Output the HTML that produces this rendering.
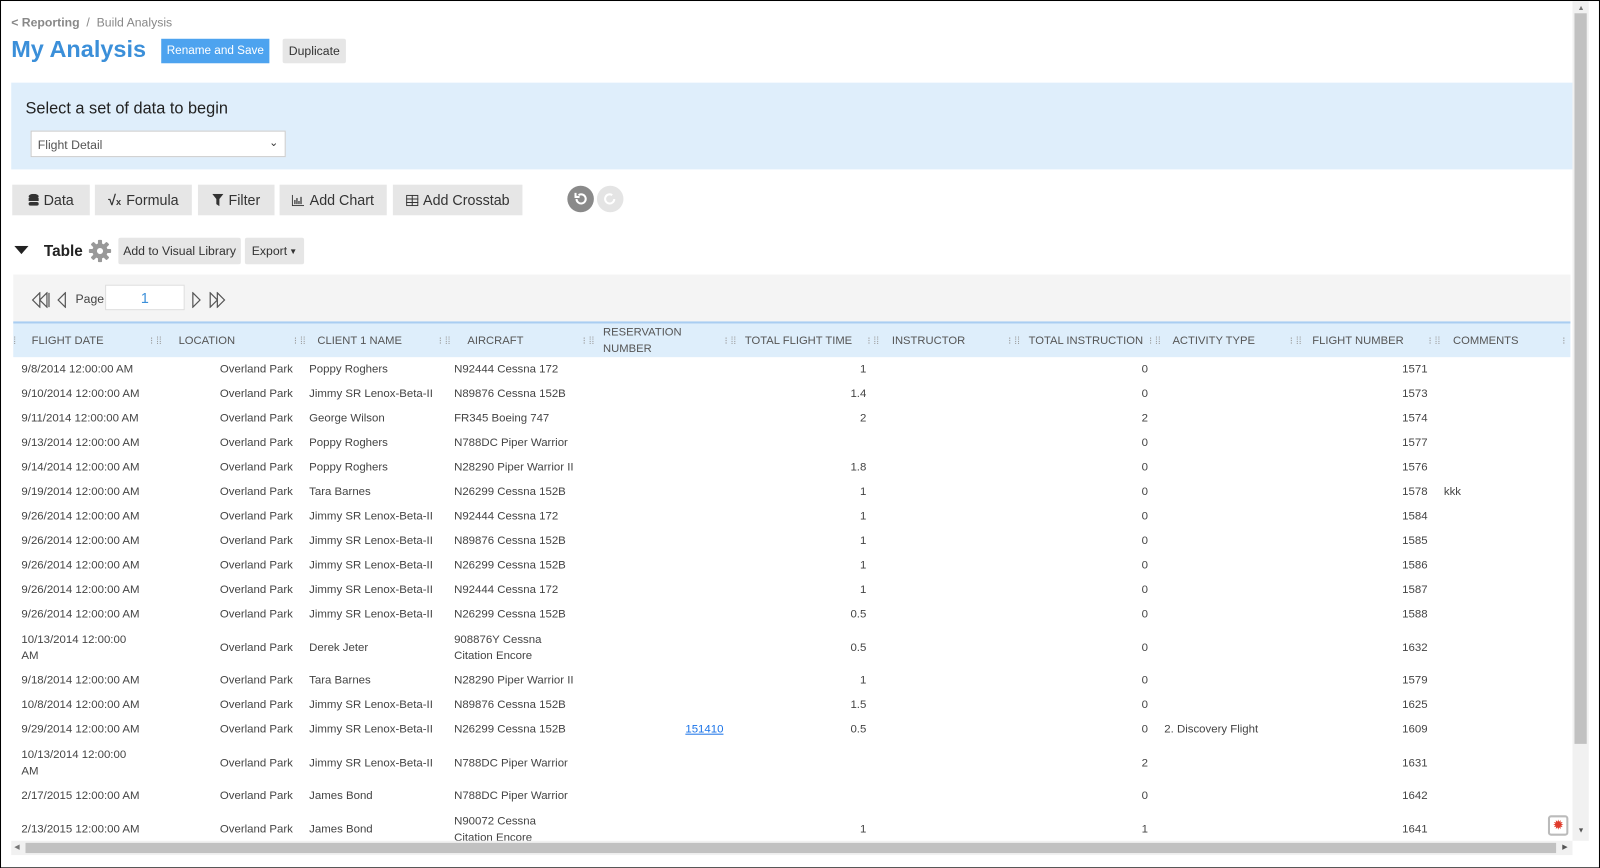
<!DOCTYPE html>
<html><head><meta charset="utf-8"><style>
*{box-sizing:border-box;margin:0;padding:0}
html,body{width:1600px;height:868px;overflow:hidden;background:#fff}
#w{position:absolute;left:0;top:0;width:1568px;height:851px;transform:scale(1.0204);transform-origin:0 0;font-family:"Liberation Sans",sans-serif;color:#444;border:1px solid #000;overflow:hidden}
.a{position:absolute}
.btn{position:absolute;background:#e6e6e6;font-size:14px;color:#333;display:flex;align-items:center;justify-content:center;gap:5px}
.sb{position:absolute;background:#e6e6e6;font-size:12px;color:#333;display:flex;align-items:center;justify-content:center;border-radius:2px}
table{border-collapse:collapse;table-layout:fixed;font-size:11.2px;color:#444}
td{vertical-align:middle;height:24px;line-height:16px;overflow:hidden;white-space:nowrap}
tr.d td{height:41px;white-space:normal}
.r{text-align:right;padding-right:7px}
.l{padding-left:9px}
.hd{position:absolute;top:0;height:34px;font-size:11px;color:#555;display:flex;align-items:center}
.h{color:#999;font-size:10px}
</style></head><body><div id="w">
<div class="a" style="left:10px;top:14px;font-size:12px;color:#888"><b style="font-weight:bold;color:#888">&lt; Reporting</b> &nbsp;/ &nbsp;Build Analysis</div>
<div class="a" style="left:10px;top:34px;font-size:23px;font-weight:bold;color:#3b8fd9">My Analysis</div>
<div class="a" style="left:157px;top:37px;width:106px;height:24px;background:#4da3ef;color:#fff;font-size:11.5px;display:flex;align-items:center;justify-content:center">Rename and Save</div>
<div class="sb" style="left:276px;top:37px;width:62px;height:24px">Duplicate</div>
<div class="a" style="left:10px;top:80px;width:1530px;height:85px;background:#dfeefb"></div>
<div class="a" style="left:24px;top:97px;font-size:16px;color:#222">Select a set of data to begin</div>
<div class="a" style="left:29px;top:127px;width:250px;height:26px;background:#fff;border:1px solid #ccc;font-size:12px;color:#555;padding:6px 6px">Flight Detail<span style="position:absolute;right:6px;top:4px;font-size:11px;color:#333">&#8964;</span></div>
<div class="btn" style="left:11px;top:180px;width:76px;height:30px"><svg width="10" height="12"><ellipse cx="5" cy="2.5" rx="5" ry="2.5" fill="#333"/><rect x="0" y="4" width="10" height="3" fill="#333"/><rect x="0" y="8" width="10" height="3.5" rx="2" fill="#333"/></svg>Data</div>
<div class="btn" style="left:92px;top:180px;width:95px;height:30px"><b style="font-size:14px">√<span style="font-size:9px">x</span></b>Formula</div>
<div class="btn" style="left:193px;top:180px;width:75px;height:30px"><svg width="11" height="12"><path d="M0 0H11L7 5V12L4 10V5Z" fill="#333"/></svg>Filter</div>
<div class="btn" style="left:273px;top:180px;width:105px;height:30px"><svg width="12" height="11"><path d="M0.5 0V10.5H12" stroke="#333" fill="none"/><path d="M3 9V5M5 9V3M7 9V6M9 9V2" stroke="#333" stroke-width="1.2"/></svg>Add Chart</div>
<div class="btn" style="left:384px;top:180px;width:127px;height:30px"><svg width="12" height="11"><rect x="0.5" y="0.5" width="11" height="10" fill="none" stroke="#333"/><path d="M0 4H12M0 7.5H12M6 0V11" stroke="#333"/></svg>Add Crosstab</div>
<div class="a" style="left:555px;top:181px;width:26px;height:26px;border-radius:50%;background:#8a8a8a"></div>
<svg class="a" style="left:561px;top:187px" width="14" height="14"><path d="M3 7A4.5 4.5 0 1 0 5 3.2" stroke="#fff" stroke-width="2" fill="none"/><path d="M2 1V5H6" stroke="#fff" stroke-width="2" fill="none"/></svg>
<div class="a" style="left:584px;top:181px;width:26px;height:26px;border-radius:50%;background:#e4e4e4"></div>
<svg class="a" style="left:590px;top:187px" width="14" height="14"><path d="M11 7A4.5 4.5 0 1 1 9 3.2" stroke="#fff" stroke-width="2" fill="none"/></svg>
<svg class="a" style="left:13px;top:240px" width="14" height="9"><path d="M0 0H14L7 8Z" fill="#222"/></svg>
<div class="a" style="left:42px;top:237px;font-size:15px;font-weight:bold;color:#222">Table</div>
<svg class="a" style="left:86px;top:234px" width="22" height="22" viewBox="0 0 22 22"><g fill="#999"><circle cx="11" cy="11" r="7.5"/><rect x="9" y="0" width="4" height="22" rx="1"/><rect x="0" y="9" width="22" height="4" rx="1"/><rect x="9" y="0" width="4" height="22" rx="1" transform="rotate(45 11 11)"/><rect x="9" y="0" width="4" height="22" rx="1" transform="rotate(-45 11 11)"/></g><circle cx="11" cy="11" r="3" fill="#fff"/></svg>
<div class="sb" style="left:115px;top:232px;width:120px;height:26px">Add to Visual Library</div>
<div class="sb" style="left:239px;top:232px;width:58px;height:26px">Export <span style="font-size:8px;margin-left:2px">▼</span></div>
<div class="a" style="left:12px;top:268px;width:1526px;height:46px;background:#f4f4f4"></div>
<svg class="a" style="left:30px;top:285px" width="42" height="16"><path d="M8 1L1 8L8 15Z M15 1L8 8L15 15Z M17 1V15 M33 1L26 8L33 15Z" fill="none" stroke="#555" stroke-width="1.2"/></svg>
<div class="a" style="left:73px;top:285px;font-size:12px;color:#444">Page</div>
<div class="a" style="left:102px;top:278px;width:78px;height:25px;background:#fff;border:1px solid #ddd;text-align:center;font-size:14px;color:#3b8fd9;padding-top:4px">1</div>
<svg class="a" style="left:186px;top:285px" width="42" height="16"><path d="M2 1L9 8L2 15Z M19 1L26 8L19 15Z M26 1L33 8L26 15Z" fill="none" stroke="#555" stroke-width="1.2"/></svg>
<div class="a" style="left:12px;top:314px;width:1526px;height:35px;background:#deeefb;border-top:2px solid #a9cdf1">
<div class="hd" style="left:0"><span class="h">⁞</span></div>
<div class="hd" style="left:18px">FLIGHT DATE</div>
<div class="hd" style="left:134px"><span class="h">⁝ ⁞⁞</span></div><div class="hd" style="left:162px">LOCATION</div>
<div class="hd" style="left:275px"><span class="h">⁝ ⁞⁞</span></div><div class="hd" style="left:298px">CLIENT 1 NAME</div>
<div class="hd" style="left:417px"><span class="h">⁝ ⁞⁞</span></div><div class="hd" style="left:445px">AIRCRAFT</div>
<div class="hd" style="left:558px"><span class="h">⁝ ⁞⁞</span></div><div class="hd" style="left:578px;line-height:16px">RESERVATION<br>NUMBER</div>
<div class="hd" style="left:697px"><span class="h">⁝ ⁞⁞</span></div><div class="hd" style="left:717px">TOTAL FLIGHT TIME</div>
<div class="hd" style="left:837px"><span class="h">⁝ ⁞⁞</span></div><div class="hd" style="left:861px">INSTRUCTOR</div>
<div class="hd" style="left:975px"><span class="h">⁝ ⁞⁞</span></div><div class="hd" style="left:995px">TOTAL INSTRUCTION</div>
<div class="hd" style="left:1113px"><span class="h">⁝ ⁞⁞</span></div><div class="hd" style="left:1136px">ACTIVITY TYPE</div>
<div class="hd" style="left:1251px"><span class="h">⁝ ⁞⁞</span></div><div class="hd" style="left:1273px">FLIGHT NUMBER</div>
<div class="hd" style="left:1387px"><span class="h">⁝ ⁞⁞</span></div><div class="hd" style="left:1411px">COMMENTS</div>
<div class="hd" style="left:1518px"><span class="h">⁝</span></div>
</div>
<div class="a" style="left:12px;top:349px;width:1526px;height:474px;overflow:hidden">
<table style="width:1526px">
<colgroup><col style="width:140px"><col style="width:141px"><col style="width:142px"><col style="width:141px"><col style="width:139px"><col style="width:140px"><col style="width:138px"><col style="width:138px"><col style="width:138px"><col style="width:136px"><col style="width:133px"></colgroup>
<tr><td style="padding-left:8px">9/8/2014 12:00:00 AM</td><td class="r">Overland Park</td><td class="l">Poppy Roghers</td><td class="l">N92444 Cessna 172</td><td></td><td class="r">1</td><td></td><td class="r">0</td><td></td><td class="r">1571</td><td></td></tr>
<tr><td style="padding-left:8px">9/10/2014 12:00:00 AM</td><td class="r">Overland Park</td><td class="l">Jimmy SR Lenox-Beta-II</td><td class="l">N89876 Cessna 152B</td><td></td><td class="r">1.4</td><td></td><td class="r">0</td><td></td><td class="r">1573</td><td></td></tr>
<tr><td style="padding-left:8px">9/11/2014 12:00:00 AM</td><td class="r">Overland Park</td><td class="l">George Wilson</td><td class="l">FR345 Boeing 747</td><td></td><td class="r">2</td><td></td><td class="r">2</td><td></td><td class="r">1574</td><td></td></tr>
<tr><td style="padding-left:8px">9/13/2014 12:00:00 AM</td><td class="r">Overland Park</td><td class="l">Poppy Roghers</td><td class="l">N788DC Piper Warrior</td><td></td><td></td><td></td><td class="r">0</td><td></td><td class="r">1577</td><td></td></tr>
<tr><td style="padding-left:8px">9/14/2014 12:00:00 AM</td><td class="r">Overland Park</td><td class="l">Poppy Roghers</td><td class="l">N28290 Piper Warrior II</td><td></td><td class="r">1.8</td><td></td><td class="r">0</td><td></td><td class="r">1576</td><td></td></tr>
<tr><td style="padding-left:8px">9/19/2014 12:00:00 AM</td><td class="r">Overland Park</td><td class="l">Tara Barnes</td><td class="l">N26299 Cessna 152B</td><td></td><td class="r">1</td><td></td><td class="r">0</td><td></td><td class="r">1578</td><td class="l">kkk</td></tr>
<tr><td style="padding-left:8px">9/26/2014 12:00:00 AM</td><td class="r">Overland Park</td><td class="l">Jimmy SR Lenox-Beta-II</td><td class="l">N92444 Cessna 172</td><td></td><td class="r">1</td><td></td><td class="r">0</td><td></td><td class="r">1584</td><td></td></tr>
<tr><td style="padding-left:8px">9/26/2014 12:00:00 AM</td><td class="r">Overland Park</td><td class="l">Jimmy SR Lenox-Beta-II</td><td class="l">N89876 Cessna 152B</td><td></td><td class="r">1</td><td></td><td class="r">0</td><td></td><td class="r">1585</td><td></td></tr>
<tr><td style="padding-left:8px">9/26/2014 12:00:00 AM</td><td class="r">Overland Park</td><td class="l">Jimmy SR Lenox-Beta-II</td><td class="l">N26299 Cessna 152B</td><td></td><td class="r">1</td><td></td><td class="r">0</td><td></td><td class="r">1586</td><td></td></tr>
<tr><td style="padding-left:8px">9/26/2014 12:00:00 AM</td><td class="r">Overland Park</td><td class="l">Jimmy SR Lenox-Beta-II</td><td class="l">N92444 Cessna 172</td><td></td><td class="r">1</td><td></td><td class="r">0</td><td></td><td class="r">1587</td><td></td></tr>
<tr><td style="padding-left:8px">9/26/2014 12:00:00 AM</td><td class="r">Overland Park</td><td class="l">Jimmy SR Lenox-Beta-II</td><td class="l">N26299 Cessna 152B</td><td></td><td class="r">0.5</td><td></td><td class="r">0</td><td></td><td class="r">1588</td><td></td></tr>
<tr class="d"><td style="padding-left:8px">10/13/2014 12:00:00<br>AM</td><td class="r">Overland Park</td><td class="l">Derek Jeter</td><td class="l">908876Y Cessna<br>Citation Encore</td><td></td><td class="r">0.5</td><td></td><td class="r">0</td><td></td><td class="r">1632</td><td></td></tr>
<tr><td style="padding-left:8px">9/18/2014 12:00:00 AM</td><td class="r">Overland Park</td><td class="l">Tara Barnes</td><td class="l">N28290 Piper Warrior II</td><td></td><td class="r">1</td><td></td><td class="r">0</td><td></td><td class="r">1579</td><td></td></tr>
<tr><td style="padding-left:8px">10/8/2014 12:00:00 AM</td><td class="r">Overland Park</td><td class="l">Jimmy SR Lenox-Beta-II</td><td class="l">N89876 Cessna 152B</td><td></td><td class="r">1.5</td><td></td><td class="r">0</td><td></td><td class="r">1625</td><td></td></tr>
<tr><td style="padding-left:8px">9/29/2014 12:00:00 AM</td><td class="r">Overland Park</td><td class="l">Jimmy SR Lenox-Beta-II</td><td class="l">N26299 Cessna 152B</td><td class="r"><span style="color:#1a73e8;text-decoration:underline">151410</span></td><td class="r">0.5</td><td></td><td class="r">0</td><td class="l">2. Discovery Flight</td><td class="r">1609</td><td></td></tr>
<tr class="d"><td style="padding-left:8px">10/13/2014 12:00:00<br>AM</td><td class="r">Overland Park</td><td class="l">Jimmy SR Lenox-Beta-II</td><td class="l">N788DC Piper Warrior</td><td></td><td></td><td></td><td class="r">2</td><td></td><td class="r">1631</td><td></td></tr>
<tr><td style="padding-left:8px">2/17/2015 12:00:00 AM</td><td class="r">Overland Park</td><td class="l">James Bond</td><td class="l">N788DC Piper Warrior</td><td></td><td></td><td></td><td class="r">0</td><td></td><td class="r">1642</td><td></td></tr>
<tr class="d"><td style="padding-left:8px">2/13/2015 12:00:00 AM</td><td class="r">Overland Park</td><td class="l">James Bond</td><td class="l">N90072 Cessna<br>Citation Encore</td><td></td><td class="r">1</td><td></td><td class="r">1</td><td></td><td class="r">1641</td><td></td></tr>
</table></div>
<div class="a" style="left:1516px;top:798px;width:20px;height:20px;border:2px solid #bbb;border-radius:3px;background:#fff;color:#e03b2b;font-size:13px;text-align:center;line-height:16px">✹</div>
<div class="a" style="left:1540px;top:0;width:16px;height:823px;background:#f1f1f1"></div>
<div class="a" style="left:1542px;top:12px;width:12px;height:716px;background:#c1c1c1"></div>
<div class="a" style="left:1545px;top:4px;font-size:7px;color:#777">▲</div>
<div class="a" style="left:1545px;top:810px;font-size:7px;color:#555">▼</div>
<div class="a" style="left:10px;top:823px;width:1530px;height:14px;background:#f1f1f1"></div>
<div class="a" style="left:24px;top:825px;width:1500px;height:10px;background:#c1c1c1"></div>
<div class="a" style="left:13px;top:825px;font-size:7px;color:#777">◀</div>
<div class="a" style="left:1530px;top:825px;font-size:7px;color:#555">▶</div>
</div></body></html>
